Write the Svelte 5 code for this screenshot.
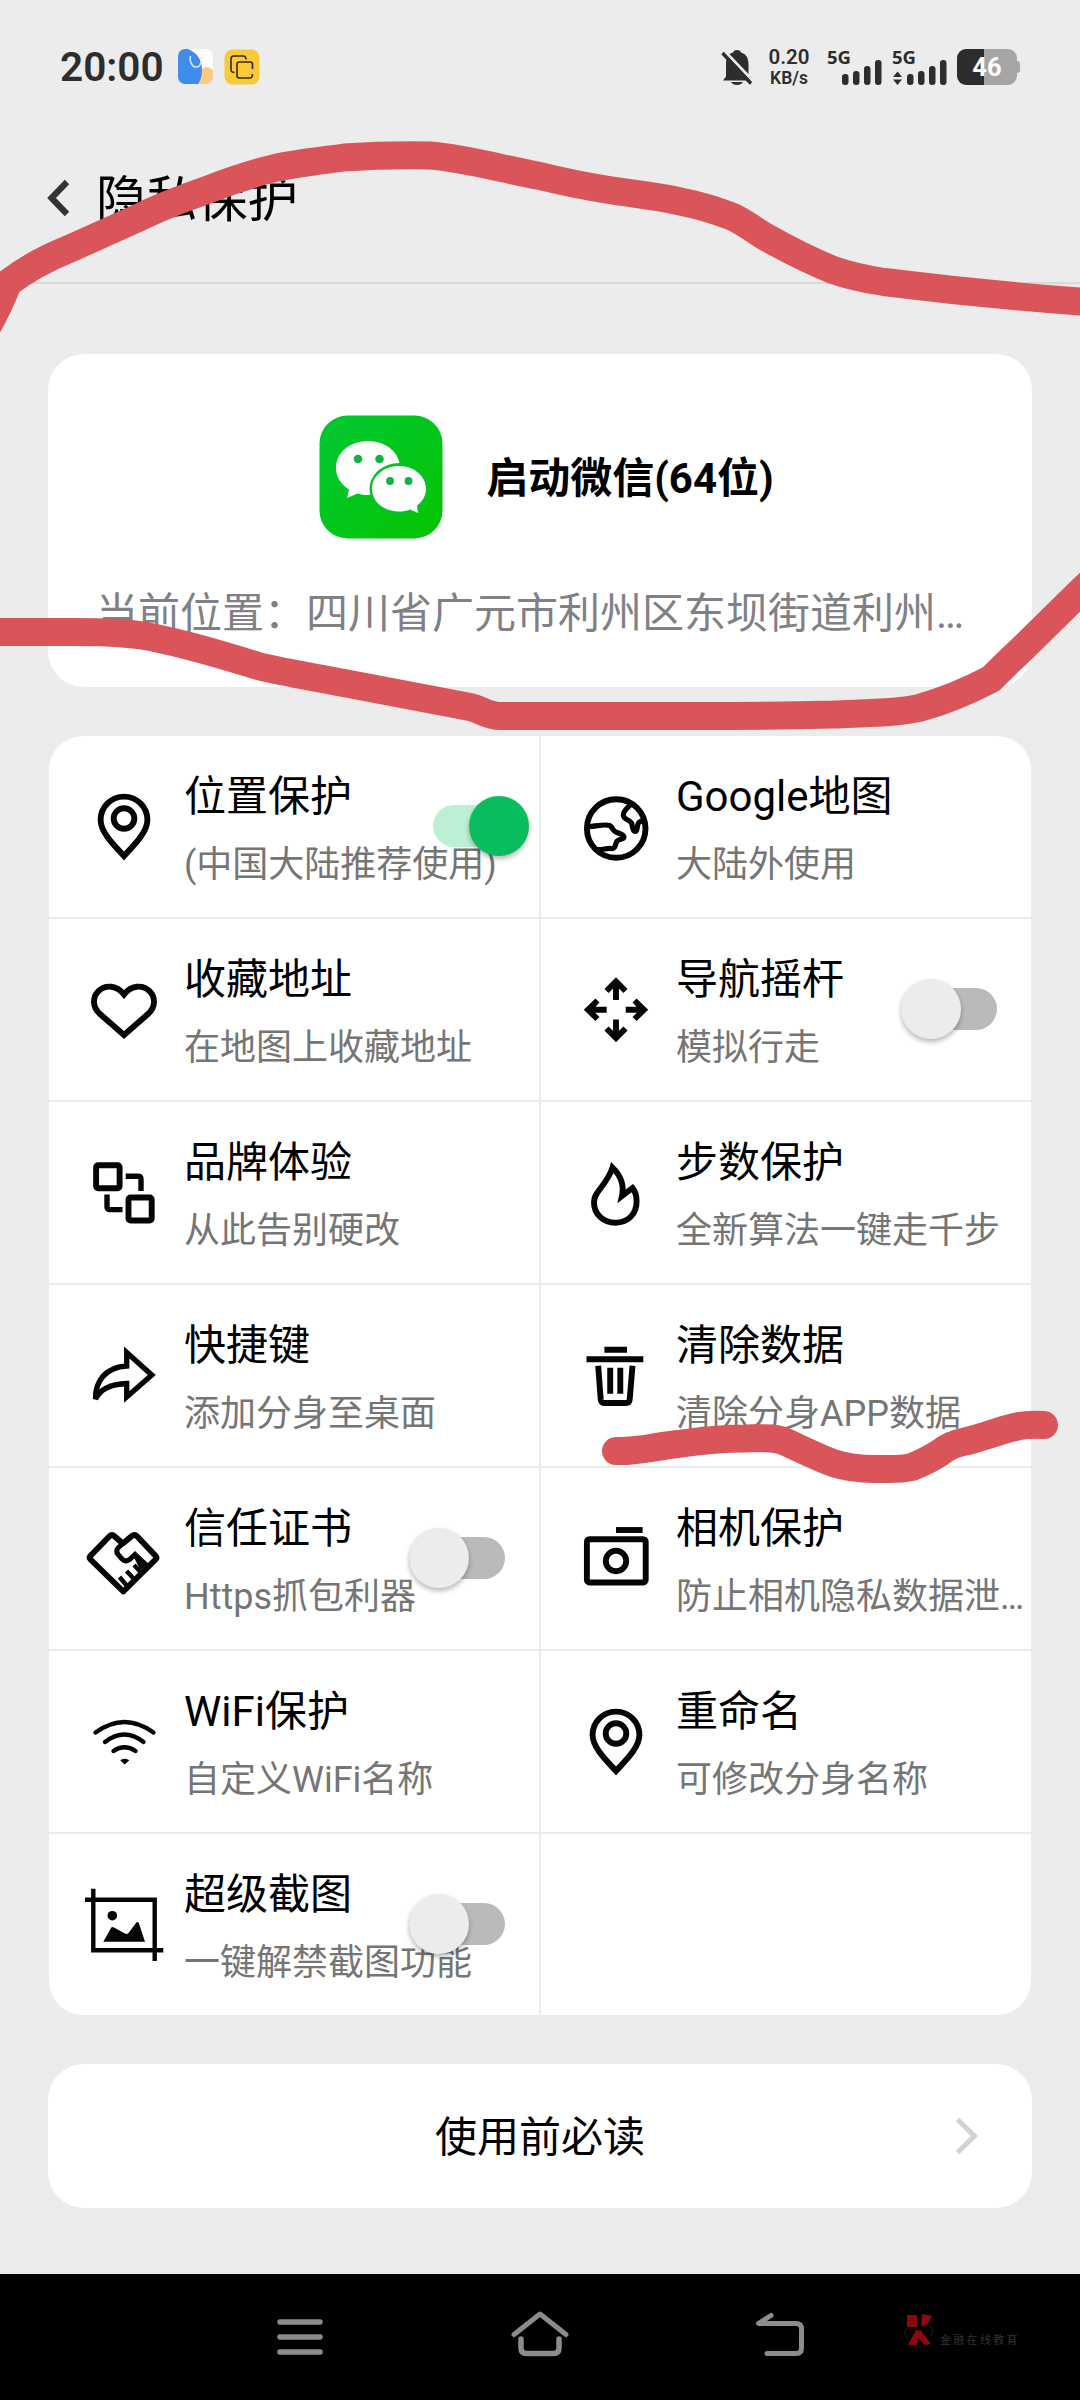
<script lang="ts">
  type Cell = {
    icon: string;
    title: string;
    sub: string;
    toggle?: 'on' | 'off';
  };

  const cells: (Cell | null)[] = [
    { icon: 'pin', title: '位置保护', sub: '(中国大陆推荐使用)', toggle: 'on' },
    { icon: 'globe', title: 'Google地图', sub: '大陆外使用' },
    { icon: 'heart', title: '收藏地址', sub: '在地图上收藏地址' },
    { icon: 'move', title: '导航摇杆', sub: '模拟行走', toggle: 'off' },
    { icon: 'swap', title: '品牌体验', sub: '从此告别硬改' },
    { icon: 'flame', title: '步数保护', sub: '全新算法一键走千步' },
    { icon: 'share', title: '快捷键', sub: '添加分身至桌面' },
    { icon: 'trash', title: '清除数据', sub: '清除分身APP数据' },
    { icon: 'hands', title: '信任证书', sub: 'Https抓包利器', toggle: 'off' },
    { icon: 'camera', title: '相机保护', sub: '防止相机隐私数据泄…' },
    { icon: 'wifi', title: 'WiFi保护', sub: '自定义WiFi名称' },
    { icon: 'pin', title: '重命名', sub: '可修改分身名称' },
    { icon: 'crop', title: '超级截图', sub: '一键解禁截图功能', toggle: 'off' },
    null
  ];
</script>

<div class="screen">
  <div class="status">
    <span class="time">20:00</span>
    <svg class="app-a" width="35" height="35" viewBox="0 0 35 35">
      <defs><clipPath id="appa"><rect width="35" height="35" rx="7" /></clipPath></defs>
      <g clip-path="url(#appa)">
        <rect width="35" height="35" fill="#fdfdfd" />
        <path d="M22 22C27 16 31 18 35 21V35H20Z" fill="#f7cb84" />
        <path d="M0 0H10C20 4 24 12 24 21C24 28 22 32 20 35H0Z" fill="#3f8cea" />
        <path d="M12.500 7C11 12 14 18.500 19 18C22 17.500 23 14 23 12" fill="none" stroke="#d6e7fb" stroke-width="1.600" />
        <path d="M23.500 9.500V8" stroke="#b8d3f5" stroke-width="1.300" />
      </g>
    </svg>
    <svg class="app-b" width="36" height="36" viewBox="0 0 36 36">
      <rect x=".5" y=".5" width="35" height="35" rx="8" fill="#f7cb38" />
      <path d="M10.500 23.500C8 23.500 7 22 7 20.500V10C7 8 8 7 10 7H19C21 7 22 8 22 10.500" fill="none" stroke="#3a2408" stroke-width="1.600" />
      <path d="M28.500 20V15C28.500 13.500 27.500 13 26 13H15C13.500 13 13 14 13 15.500V26.500C13 28 14 29 15.500 29H26C28 29 28.500 28 28.500 25" fill="none" stroke="#3a2408" stroke-width="1.600" />
    </svg>
    <div class="spacer"></div>
    <svg class="bell" width="32" height="37" viewBox="0 0 32 37">
      <path d="M2 31.500L5 27.500V15C5 8 8 4.500 12 3.500C13 .2 19 .2 20 3.500C25 5 27.500 9 27.500 15V27.500L31 31.500Z" fill="#2d2d2d" />
      <path d="M10 33H22C20 37 12 37 10 33Z" fill="#2d2d2d" />
      <path d="M3 1.500L33 33" stroke="#ececec" stroke-width="3" />
      <path d="M1.500 4L30 34.500" stroke="#2d2d2d" stroke-width="3.400" />
    </svg>
    <div class="speed"><b>0.20</b><span>KB/s</span></div>
    <div class="signal">
      <b>5G</b>
      <svg width="56" height="36" viewBox="0 0 56 36" fill="#2d2d2d">
        <rect x="15" y="25" width="6.500" height="11" rx="3" />
        <rect x="26" y="22" width="6.500" height="14" rx="3" />
        <rect x="37" y="17" width="6.500" height="19" rx="3" />
        <rect x="48" y="11" width="6.500" height="25" rx="3" />
      </svg>
    </div>
    <div class="signal second">
      <b>5G</b>
      <svg width="56" height="36" viewBox="0 0 56 36" fill="#2d2d2d">
        <path d="M1 28L5.500 22.500L10 28ZM1 30.500L5.500 36L10 30.500Z" />
        <rect x="15" y="25" width="6.500" height="11" rx="3" />
        <rect x="26" y="22" width="6.500" height="14" rx="3" />
        <rect x="37" y="17" width="6.500" height="19" rx="3" />
        <rect x="48" y="11" width="6.500" height="25" rx="3" />
      </svg>
    </div>
    <div class="battery"><span>46</span></div>
  </div>

  <header>
    <svg width="24" height="40" viewBox="0 0 24 40">
      <path d="M20 4L4.500 20L20 36" fill="none" stroke="#333" stroke-width="6.200" />
    </svg>
    <h1>隐私保护</h1>
  </header>

  <main>
    <section class="launch">
      <div class="launch-row">
        <svg width="124" height="124" viewBox="0 0 124 124">
          <defs>
            <linearGradient id="wx" x1="0" y1="0" x2="1" y2="1">
              <stop offset="0" stop-color="#00c834" />
              <stop offset="1" stop-color="#06c400" />
            </linearGradient>
          </defs>
          <rect x=".5" y=".5" width="123" height="123" rx="28" fill="url(#wx)" />
          <path d="M49 26C67 26 81 37.500 81 53C81 69 67 80 49 80C45 80 42 79.500 38.500 78.500L28 83L30 74.500C22 69.500 17 62 17 53C17 37.500 31 26 49 26Z" fill="#fff" />
          <ellipse cx="80" cy="74" rx="29.500" ry="26" fill="#0abf2b" />
          <path d="M80 51C95 51 107 61 107 74C107 80.500 103.500 86.500 98 90.500L99 98L91 94.500C87.500 96 84 96.500 80 96.500C65 96.500 53 87 53 74C53 61 65 51 80 51Z" fill="#fff" />
          <g fill="#0fb544">
            <circle cx="39" cy="44" r="4.300" /><circle cx="60.500" cy="44" r="4.300" />
            <circle cx="71" cy="66" r="3.900" /><circle cx="89.500" cy="66" r="3.900" />
          </g>
        </svg>
        <strong>启动微信(64位)</strong>
      </div>
      <p>当前位置：四川省广元市利州区东坝街道利州…</p>
    </section>

    <section class="grid">
      {#each cells as cell}
        <div class="cell">
          {#if cell}
            <svg class="icon" width="90" height="90" viewBox="0 0 90 90" fill="none" stroke="#050505" stroke-width="5.900">
              {#if cell.icon === 'pin'}
                <path d="M45 74C37 65 21.600 51 21.600 38A23.400 23.400 0 0 1 68.400 38C68.400 51 53 65 45 74Z" />
                <circle cx="45" cy="36.500" r="10.300" />
              {:else if cell.icon === 'globe'}
                <circle cx="45.200" cy="46.500" r="29.300" />
                <path d="M17 44.500C24 45 33 41.500 38.500 43.500C42 45 41 48 44 49.500C47 51.500 53 52 53 55C53 58 47 56.500 45.500 60C44 64 44 67 40 66.500C35 66 31 68.500 24 67.500" stroke-width="5.200" />
                <path d="M60.500 22C57 25 52 29 52.300 33C52.500 38 58 37 60.500 41C62 44 61 49.500 64 49.500C67.500 49.500 65 42 68.500 40C71 38.500 72 39 75 39" stroke-width="5.200" />
              {:else if cell.icon === 'heart'}
                <path d="M45 70L21 49C13 42 13.500 32 19.500 26C27 19 38 20.500 45 29.500C52 20.500 63 19 70.500 26C76.500 32 77 42 69 49Z" />
              {:else if cell.icon === 'move'}
                <path d="M45 35V19M35.500 26L45 16.500L54.500 26M45 54.500V71M35.500 63.500L45 73L54.500 63.500M35.700 44.800H19M26.500 35.500L17 44.800L26.500 54M54.700 44.800H71M63.500 35.500L73 44.800L63.500 54" />
              {:else if cell.icon === 'swap'}
                <rect x="17.100" y="17.200" width="23.500" height="23" rx="2" />
                <rect x="49.500" y="49.500" width="23.200" height="23" rx="2" />
                <path d="M46.700 28.300H59C61 28.300 62 29 62 31.500V43M28 46.600V58.500C28 61 29 61.600 31 61.600H43.500" stroke-width="5.400" />
              {:else if cell.icon === 'flame'}
                <path d="M41.500 19.500C50 28 53.500 37 51 48L61.500 40C64 43 65.600 48 65.600 53.500C65.600 66 57 74.700 44.500 74.700C32 74.700 23 66 23 54.500C23 49 25 46 29 41C34 34.500 39 28 41.500 19.500Z" />
              {:else if cell.icon === 'share'}
                <path d="M47.700 21.500L72.800 44L47.700 66V52.500C34 53 22 56.500 16.500 68C16 50 27 36 47.700 35Z" stroke-width="5.300" />
              {:else if cell.icon === 'trash'}
                <path d="M33.400 18.700H56M15.500 28.200H72.300M39.200 36.700V62.700M49.300 36.700V62.700" />
                <path d="M27.200 34.700L29.700 68.500C30 71 31 72 33 72H55C57 72 58.500 71 58.700 68.500L61.500 34.700" />
              {:else if cell.icon === 'hands'}
                <path stroke-linejoin="round" d="M44.300 77.500L11.500 45.500Q9.800 43.700 11.500 41.800L30.500 22.300Q33 19.700 35.500 22.300L43.800 29.500L52.500 22.300Q55.500 19.700 58 22.300L76.500 41.800Q78.300 43.700 76.500 45.500Z" />
                <path d="M43.800 29.500L39 34Q36.500 37 39 40.500L43 45Q46.500 48.500 50.500 45.500L56 40.500L70 53.500" stroke-width="5" />
                <path d="M57 42L63.500 54.500" stroke-width="5" />
                <path d="M40.500 63L48.500 72.500M47.500 57L56 66M55 51L63.500 60" stroke-width="4.400" />
              {:else if cell.icon === 'camera'}
                <rect x="15.900" y="25.200" width="58.800" height="43.300" rx="2.500" />
                <circle cx="45" cy="47" r="10.200" />
                <path d="M45 16H71.600" />
              {:else if cell.icon === 'wifi'}
                <g stroke-width="4.400" stroke-linecap="round">
                  <path d="M16.500 35.500Q45.500 14.500 74.500 35.500M26 45Q45.500 30 64.500 45M34.500 54Q45.500 46.500 56.500 54" />
                </g>
                <path d="M42.500 63.500L45.700 66.500L49 63.500Q45.700 61.500 42.500 63.500Z" fill="#050505" stroke-width="1.600" />
              {:else if cell.icon === 'crop'}
                <path d="M14.300 8.700V70.300H84.300M6 19.700H75.700V81" stroke-width="4.400" />
                <circle cx="33.300" cy="35.700" r="4.800" fill="#050505" stroke="none" />
                <path d="M24.300 61.700L32 48Q33 46.500 35 47.500L46 53.500Q48 54.500 49.500 53L57 43Q59 41 60 43.500L66 61.700Z" fill="#050505" stroke="none" />
              {/if}
            </svg>
            <div class="text">
              <h2>{cell.title}</h2>
              <p>{cell.sub}</p>
            </div>
            {#if cell.toggle}
              <div class="toggle {cell.toggle}"><i></i></div>
            {/if}
          {/if}
        </div>
      {/each}
    </section>

    <section class="notice">
      <span>使用前必读</span>
      <svg width="26" height="40" viewBox="0 0 26 40">
        <path d="M3.500 3.500L20.500 20L3.500 36.500" fill="none" stroke="#d2d2d2" stroke-width="5" />
      </svg>
    </section>
  </main>

  <nav>
    <svg width="46" height="44" viewBox="0 0 46 44">
      <path d="M3 6H43M3 21H43M3 36H43" stroke="#8c8c8c" stroke-width="5.500" stroke-linecap="round" />
    </svg>
    <svg width="58" height="50" viewBox="0 0 58 50">
      <path d="M3 24.500L29 4L55 24.500" fill="none" stroke="#8c8c8c" stroke-width="5" stroke-linecap="round" stroke-linejoin="round" />
      <path d="M10 29V38Q10 43.500 15.500 43.500H42.500Q48 43.500 48 38V29" fill="none" stroke="#8c8c8c" stroke-width="5.500" stroke-linecap="round" />
    </svg>
    <svg width="50" height="46" viewBox="0 0 50 46">
      <path d="M16 3.500L3.500 11.500H41Q46.500 11.500 46.500 17V36Q46.500 41.500 41 41.500H12" fill="none" stroke="#8c8c8c" stroke-width="5" stroke-linecap="round" stroke-linejoin="round" />
    </svg>
    <div class="mark">
      <svg width="30" height="34" viewBox="0 0 30 34">
        <path d="M3 2H13V14H3ZM18 1L28 3L24 11L17 13.500ZM4 32L12 17L17 17.500L27 31L21 32L14 25L13 32Z" fill="#8c0710" />
        <path d="M3 15Q-2 21 4 25M26 13Q32 18 26 23" fill="none" stroke="#1a1a1a" stroke-width="1.200" />
      </svg>
      <span>金融在线教育</span>
    </div>
  </nav>

  <svg class="ink" width="1080" height="1500" viewBox="0 0 1080 1500" fill="none" stroke="#da555a" stroke-width="28" stroke-linecap="round" stroke-linejoin="round">
    <path d="M-13 327Q-2 308 8 283Q34 263 69 249L138 218C164 205 184 198 207 190C232 180 250 174 275 168C298 163 318 161 344 157.500C374 155.500 402 155 430 155.500C464 158 502 169 540 176C564 182 584 186 609 190C634 194 656 196 678 201C698 205 718 211 733 217C744 222 754 230 764 236C787 249 808 260 833 270C850 276 864 279 884 282C948 290 1014 297 1100 303" />
    <path d="M-10 632H60C85 632 128 631 155 638C194 646 226 656 258 666C286 673 314 677 344 683L470 707C480 709 488 716 500 716H700C760 716 790 715.500 833 714.500C866 713 898 713 919 708C945 701 970 690 991 679Q1004 666 1022 649L1080 592L1100 573" />
    <path d="M616 1451C637 1452 658 1446 678 1444C705 1440 725 1438.500 747 1438.500C765 1438 776 1437 788 1443C803 1450 817 1457 833 1463C848 1468 860 1469 875 1469C890 1469 900 1470 912 1467C922 1463 932 1458 941 1452C947 1447 953 1444 963 1442C981 1438 998 1431 1015 1427Q1025 1424 1044 1425" />
  </svg>
</div>

<style>
  :global(body) { margin: 0; }
  .screen {
    position: relative;
    width: 1080px;
    height: 2400px;
    overflow: hidden;
    display: flex;
    flex-direction: column;
    background: #ececec;
    color: #000;
    font-family: Roboto, "Noto Sans CJK SC", sans-serif;
  }
  h1, h2, p { margin: 0; font-weight: 400; }
  svg { display: block; flex: none; }

  .status {
    display: flex;
    align-items: flex-start;
    height: 85px;
    padding: 49px 60px 0 60px;
    box-sizing: border-box;
    color: #2d2d2d;
  }
  .time { width: 118px; font-size: 40.5px; line-height: 36px; font-weight: 600; white-space: nowrap; }
  .app-b { margin-left: 11px; }
  .spacer { flex: 1; }
  .speed {
    display: flex;
    flex-direction: column;
    align-items: center;
    width: 42px;
    margin: -1px 17px 0 15px;
    white-space: nowrap;
  }
  .speed b { font-size: 20.5px; line-height: 18px; font-weight: 600; }
  .speed span { font-size: 17.5px; line-height: 24px; font-weight: 600; }
  .signal { display: grid; width: 56px; }
  .signal > * { grid-area: 1 / 1; }
  .signal b { font: 700 18.5px/16px "Noto Sans", sans-serif; }
  .second { margin: 0 9px; }
  .battery {
    position: relative;
    width: 60px;
    height: 36px;
    margin-right: 3px;
    border-radius: 9px;
    background: linear-gradient(90deg, #2d2d2d 27px, #a5a5a5 27px);
    color: #fff;
    text-align: center;
    font-size: 25.5px;
    line-height: 36px;
    font-weight: 700;
  }
  .battery::after {
    content: '';
    position: absolute;
    left: 60px;
    top: 12px;
    width: 3px;
    height: 12px;
    border-radius: 0 3px 3px 0;
    background: #a5a5a5;
  }

  header {
    display: flex;
    align-items: center;
    height: 199px;
    padding: 0 0 0 47px;
    box-sizing: border-box;
    border-bottom: 2px solid #d9d9d9;
  }
  header svg { margin-top: 29px; }
  header h1 { margin: 33px 0 0 25px; font-size: 50.5px; line-height: 60px; }

  main {
    display: flex;
    flex-direction: column;
    padding: 70px 48px 0;
    height: 1990px;
    box-sizing: border-box;
  }
  .launch {
    height: 333px;
    box-sizing: border-box;
    padding: 61px 48px 0;
    border-radius: 36px;
    background: #fff;
  }
  .launch-row { display: flex; align-items: center; justify-content: center; gap: 43px; height: 124px; padding-left: 13px; }
  .launch strong { padding-top: 3px; font-size: 42px; line-height: 60px; font-weight: 700; white-space: nowrap; }
  .launch p { margin: 45px 0 0; font-size: 42px; line-height: 60px; color: #808086; white-space: nowrap; }

  .grid {
    display: grid;
    grid-template-columns: 490px 490px;
    grid-auto-rows: 181px;
    gap: 2px;
    margin: 49px 1px 0;
    border-radius: 34px;
    overflow: hidden;
  }
  .cell {
    position: relative;
    display: flex;
    align-items: center;
    padding-left: 30px;
    background: #fff;
  }
  .text { padding: 5px 0 0 15px; white-space: nowrap; }
  .text h2 { font-size: 42px; line-height: 62px; }
  .text p { margin-top: 9px; font-size: 36px; line-height: 56px; color: #757575; }

  .toggle {
    position: absolute;
    top: 69px;
    right: 34px;
    display: flex;
    align-items: center;
    width: 96px;
    height: 42px;
    border-radius: 21px;
    background: #bababa;
  }
  .toggle i {
    width: 60px;
    height: 60px;
    flex: none;
    border-radius: 50%;
    background: #ececec;
    box-shadow: 0 3px 5px rgba(0, 0, 0, 0.28);
  }
  .toggle.on { right: 10px; justify-content: flex-end; background: #bdefd5; }
  .toggle.on i { background: #09bd5f; }

  .notice {
    display: flex;
    align-items: center;
    height: 144px;
    margin-top: 49px;
    padding-right: 52px;
    border-radius: 36px;
    background: #fff;
    font-size: 42px;
  }
  .notice span { flex: 1; padding: 3px 0 0 78px; text-align: center; line-height: 60px; }

  nav {
    display: flex;
    align-items: center;
    height: 126px;
    padding-left: 277px;
    background: #000;
  }
  nav > svg:nth-child(1) { margin-top: 2px; }
  nav > svg:nth-child(2) { margin-left: 188px; margin-top: -5px; }
  nav > svg:nth-child(3) { margin-left: 186px; margin-top: -4px; }
  .mark { display: flex; align-items: flex-end; margin: -14px 0 0 99px; color: #333; }
  .mark span { margin-left: 6px; font-size: 11px; line-height: 12px; letter-spacing: 2.3px; white-space: nowrap; }

  .ink { position: absolute; left: 0; top: 0; pointer-events: none; }
</style>
